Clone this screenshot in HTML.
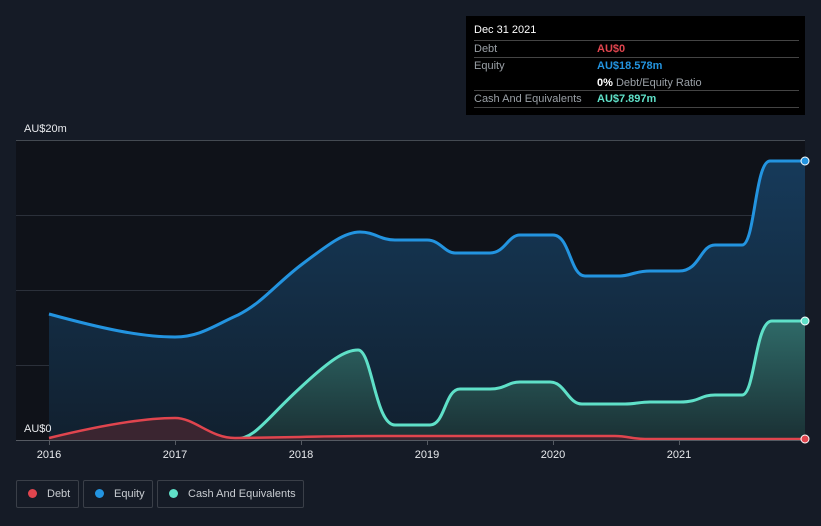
<!DOCTYPE html><html><head><style>
body{margin:0;width:821px;height:526px;background:#151b26;font-family:"Liberation Sans",sans-serif;overflow:hidden;position:relative}
.tip{position:absolute;left:466px;top:16px;width:339px;height:99px;background:#000;color:#fff;font-size:11px}
.row{position:absolute;left:8px;width:325px;border-top:1px solid #444;height:16px;line-height:16px}
.lab{color:#9aa0a6}
.leg{position:absolute;top:480px;height:26px;border:1px solid #3a3f48;border-radius:2px;color:#c8ccd1;font-size:11px;line-height:26px}
.leg i{display:inline-block;width:9px;height:9px;border-radius:50%;margin:0 10px 0 11px;vertical-align:-1px}
</style></head><body>
<svg width="821" height="526" style="position:absolute;left:0;top:0">
<defs><linearGradient id="eg" x1="0" y1="0" x2="0" y2="1"><stop offset="0" stop-color="#163a5a"/><stop offset="1" stop-color="#11202f"/></linearGradient>
<linearGradient id="cg" x1="0" y1="0" x2="0" y2="1"><stop offset="0" stop-color="#2f6a68"/><stop offset="1" stop-color="#1a3034"/></linearGradient></defs>
<rect x="16" y="140" width="789" height="300" fill="#0f1219"/>
<g stroke="#2b303a" stroke-width="1"><line x1="16" y1="140.5" x2="805" y2="140.5" stroke="#444a52"/><line x1="16" y1="215.5" x2="805" y2="215.5"/><line x1="16" y1="290.5" x2="805" y2="290.5"/><line x1="16" y1="365.5" x2="805" y2="365.5"/></g>
<path d="M49 314 C100 328,140 337,175 337 C200 337,215 325,238 315 C262 303,275 285,301 265 C330 243,345 232,360 232 C375 232,380 240,395 240 L427 240 C440 240,445 253,455 253 L490 253 C505 253,508 235,520 235 L553 235 C570 235,570 276,585 276 L620 276 C630 276,635 271,650 271 L679 271 C700 271,700 245,715 245 L742 245 C755 245,755 161,770 161 L805 161 L805 440 L49 440Z" fill="url(#eg)"/>
<path d="M49 314 C100 328,140 337,175 337 C200 337,215 325,238 315 C262 303,275 285,301 265 C330 243,345 232,360 232 C375 232,380 240,395 240 L427 240 C440 240,445 253,455 253 L490 253 C505 253,508 235,520 235 L553 235 C570 235,570 276,585 276 L620 276 C630 276,635 271,650 271 L679 271 C700 271,700 245,715 245 L742 245 C755 245,755 161,770 161 L805 161" fill="none" stroke="#2394e0" stroke-width="3"/>
<path d="M49 439 L235 439 C255 439,265 420,300 388 C330 360,345 350,358 350 C372 350,375 425,395 425 L430 425 C445 425,445 389,460 389 L490 389 C505 389,508 382,520 382 L550 382 C565 382,568 404,582 404 L625 404 C635 404,640 402,650 402 L680 402 C700 402,700 395,715 395 L742 395 C755 395,755 321,772 321 L805 321 L805 440 L49 440Z" fill="url(#cg)"/>
<path d="M49 439 L235 439 C255 439,265 420,300 388 C330 360,345 350,358 350 C372 350,375 425,395 425 L430 425 C445 425,445 389,460 389 L490 389 C505 389,508 382,520 382 L550 382 C565 382,568 404,582 404 L625 404 C635 404,640 402,650 402 L680 402 C700 402,700 395,715 395 L742 395 C755 395,755 321,772 321 L805 321" fill="none" stroke="#5fe0c8" stroke-width="3"/>
<path d="M49 438 C90 428,140 418,175 418 C195 418,210 438,235 438 L300 437 C330 436,360 436,400 436 L615 436 C628 436,632 439,645 439 L805 439 L805 440 L49 440Z" fill="#3a2530"/>
<path d="M49 438 C90 428,140 418,175 418 C195 418,210 438,235 438 L300 437 C330 436,360 436,400 436 L615 436 C628 436,632 439,645 439 L805 439" fill="none" stroke="#e0454e" stroke-width="2.5"/>
<line x1="16" y1="440.5" x2="805" y2="440.5" stroke="#555a62"/>
<g stroke="#555a62"><line x1="49.5" y1="440" x2="49.5" y2="445"/><line x1="175.5" y1="440" x2="175.5" y2="445"/><line x1="301.5" y1="440" x2="301.5" y2="445"/><line x1="427.5" y1="440" x2="427.5" y2="445"/><line x1="553.5" y1="440" x2="553.5" y2="445"/><line x1="679.5" y1="440" x2="679.5" y2="445"/></g>
<circle cx="805" cy="161" r="4" fill="#2394e0" stroke="#fff" stroke-width="1"/>
<circle cx="805" cy="321" r="4" fill="#5fe0c8" stroke="#fff" stroke-width="1"/>
<circle cx="805" cy="439" r="4" fill="#e0454e" stroke="#fff" stroke-width="1"/>
<g fill="#e8eaed" font-size="11" font-family="Liberation Sans,sans-serif">
<text x="24" y="132">AU$20m</text><text x="24" y="432">AU$0</text>
<g text-anchor="middle"><text x="49" y="458">2016</text><text x="175" y="458">2017</text><text x="301" y="458">2018</text><text x="427" y="458">2019</text><text x="553" y="458">2020</text><text x="679" y="458">2021</text></g></g>
</svg>
<div class="tip">
<div style="position:absolute;left:8px;top:8px">Dec 31 2021</div>
<div class="row" style="top:24px"><span class="lab">Debt</span><span style="position:absolute;left:123px;color:#e0454e;font-weight:bold">AU$0</span></div>
<div class="row" style="top:41px;height:33px"><span class="lab">Equity</span><span style="position:absolute;left:123px;color:#2394e0;font-weight:bold">AU$18.578m</span><span style="position:absolute;left:123px;top:17px"><b>0%</b> <span class="lab">Debt/Equity Ratio</span></span></div>
<div class="row" style="top:74px;border-bottom:1px solid #444"><span class="lab">Cash And Equivalents</span><span style="position:absolute;left:123px;color:#5fe0c8;font-weight:bold">AU$7.897m</span></div>
</div>
<div class="leg" style="left:16px;width:61px"><i style="background:#e0454e"></i>Debt</div>
<div class="leg" style="left:83px;width:68px"><i style="background:#2394e0"></i>Equity</div>
<div class="leg" style="left:157px;width:145px"><i style="background:#5fe0c8"></i>Cash And Equivalents</div>
</body></html>
